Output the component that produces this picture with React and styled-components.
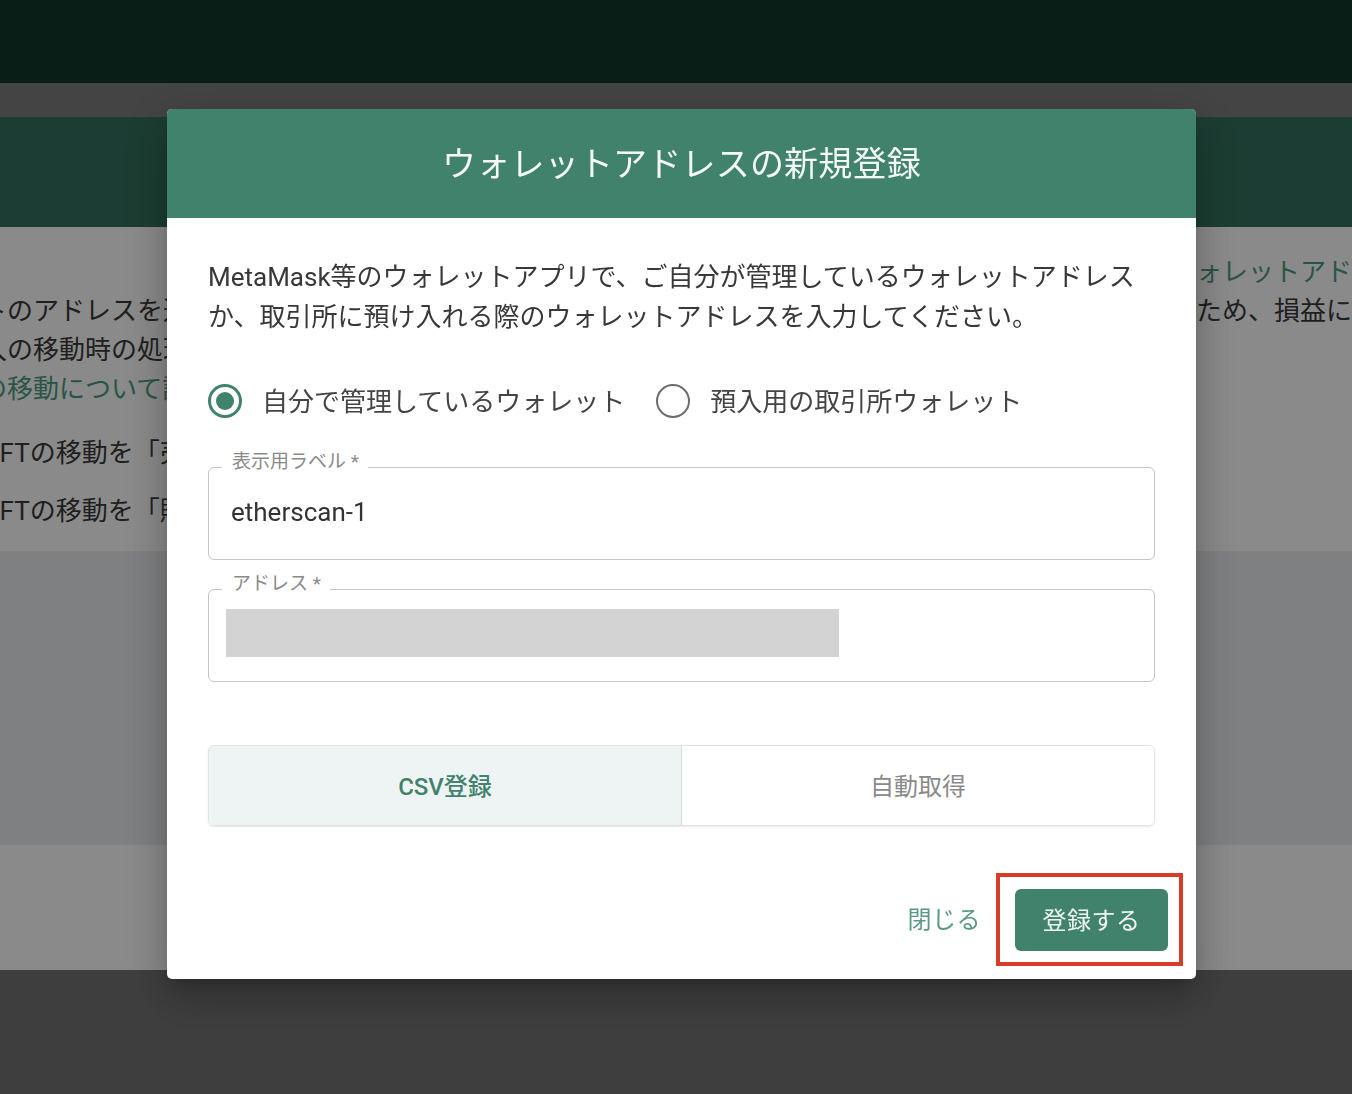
import React from "react";
import styled, { createGlobalStyle } from "styled-components";

const FONT = `"Roboto", "Noto Sans CJK JP", "Noto Sans", sans-serif`;
const GREEN = "#41826d";

const Global = createGlobalStyle`
  html, body {
    margin: 0;
    padding: 0;
    height: 1094px;
    overflow: hidden;
    font-family: ${FONT};
    background: #ffffff;
  }
  * { box-sizing: border-box; }
`;

/* ---------- background page ---------- */
const Page = styled.div`
  display: flex;
  flex-direction: column;
  width: 100%;
  height: 1094px;
  overflow: hidden;
`;

const TopNav = styled.header`
  height: 83px;
  background: #14392e;
  flex-shrink: 0;
`;

const SubBar = styled.div`
  height: 34px;
  background: #7e7e7e;
  flex-shrink: 0;
`;

const HeroBand = styled.div`
  height: 110px;
  background: #34715e;
  flex-shrink: 0;
`;

const ContentSection = styled.section`
  height: 324px;
  flex-shrink: 0;
  background: #ffffff;
  display: grid;
  grid-template-columns: 1170px 1fr;
  overflow: hidden;
  font-size: 26px;
  color: #3a3a3a;
  white-space: nowrap;
`;

const LeftCol = styled.div`
  margin-left: -19px;
  padding-top: 65px;
  overflow: hidden;
`;

const RightCol = styled.div`
  padding-top: 26px;
`;

const BgLine = styled.div`
  line-height: 39px;
  height: 39px;
  color: ${(p) => (p.$link ? "#4d9d83" : "#3a3a3a")};
`;

const BgItem = styled.div`
  line-height: 40px;
  margin-top: ${(p) => p.$gap}px;
`;

const GraySection = styled.div`
  height: 294px;
  flex-shrink: 0;
  background: #ebedf1;
`;

const WhiteSection = styled.div`
  height: 125px;
  flex-shrink: 0;
  background: #ffffff;
`;

const PageFooter = styled.footer`
  flex: 1;
  background: #747474;
`;

/* ---------- dialog ---------- */
const Backdrop = styled.div`
  position: fixed;
  inset: 0;
  background: rgba(0, 0, 0, 0.46);
  display: flex;
  align-items: center;
  justify-content: center;
  padding-left: 11px;
  padding-bottom: 6px;
`;

const Dialog = styled.div`
  width: 1029px;
  background: #ffffff;
  border-radius: 5px;
  overflow: hidden;
  box-shadow: 0 11px 15px -7px rgba(0, 0, 0, 0.2),
    0 24px 38px 3px rgba(0, 0, 0, 0.14), 0 9px 46px 8px rgba(0, 0, 0, 0.12);
  font-family: ${FONT};
`;

const DialogHeader = styled.div`
  height: 109px;
  background: ${GREEN};
  display: flex;
  align-items: center;
  justify-content: center;
  padding-bottom: 4px;
`;

const Title = styled.h2`
  margin: 0;
  font-size: 34px;
  font-weight: 400;
  color: #f4f8f6;
  letter-spacing: 0.2px;
`;

const DialogBody = styled.div`
  padding: 39px 41px 0;
`;

const Description = styled.p`
  margin: 0;
  font-size: 26px;
  line-height: 40px;
  color: #383838;
`;

const RadioGroup = styled.div`
  margin-top: 40px;
  height: 48px;
  display: flex;
  align-items: center;
  gap: 31px;
`;

const RadioOption = styled.label`
  display: flex;
  align-items: center;
  gap: 20px;
  font-size: 26px;
  color: #444;
  padding-bottom: 3px;
  cursor: pointer;
`;

const RadioCircle = styled.span`
  width: 34px;
  height: 34px;
  border-radius: 50%;
  border: ${(p) => (p.$checked ? `3px solid ${GREEN}` : "2.5px solid #6d6d6d")};
  display: flex;
  align-items: center;
  justify-content: center;
  flex-shrink: 0;
  margin-top: 3px;
  &::after {
    content: "";
    width: 18px;
    height: 18px;
    border-radius: 50%;
    background: ${GREEN};
    display: ${(p) => (p.$checked ? "block" : "none")};
  }
`;

const Field = styled.div`
  position: relative;
  margin-top: ${(p) => p.$gap}px;
  height: 93px;
  border: 1.5px solid #c6c6c6;
  border-radius: 6px;
  display: flex;
  align-items: ${(p) => (p.$top ? "flex-start" : "center")};
`;

const FieldLabel = styled.span`
  position: absolute;
  top: -18px;
  left: 13px;
  padding: 0 9px 0 10px;
  background: #ffffff;
  font-size: 19px;
  line-height: 24px;
  color: #8a8a8a;
`;

const FieldInput = styled.input`
  border: none;
  outline: none;
  background: transparent;
  width: 100%;
  padding: 0 0 3px 22px;
  font-family: ${FONT};
  font-size: 26px;
  color: #333;
`;

const Redacted = styled.div`
  margin: 19px 0 0 17px;
  width: 613px;
  height: 48px;
  background: #d3d3d3;
`;

const Tabs = styled.div`
  margin-top: 63px;
  height: 81px;
  display: grid;
  grid-template-columns: 472px 1fr;
  border: 1.5px solid #dfe3e2;
  border-radius: 6px;
  overflow: hidden;
  box-shadow: 0 1px 2px rgba(0, 0, 0, 0.1);
`;

const Tab = styled.button`
  border: none;
  border-left: ${(p) => (p.$first ? "none" : "1.5px solid #d6dcda")};
  background: ${(p) => (p.$active ? "#eef4f3" : "#ffffff")};
  color: ${(p) => (p.$active ? GREEN : "#8a8a8a")};
  font-family: ${FONT};
  font-size: 24px;
  font-weight: ${(p) => (p.$active ? 500 : 400)};
  display: flex;
  align-items: center;
  justify-content: center;
  padding: 0 0 3px;
  cursor: pointer;
`;

const DialogFooter = styled.div`
  margin-top: 47px;
  padding: 0 13px 13px;
  display: flex;
  justify-content: flex-end;
  align-items: center;
  gap: 15px;
`;

const TextButton = styled.button`
  border: none;
  background: none;
  padding: 0 0 4px;
  font-family: ${FONT};
  font-size: 24px;
  color: #5b9985;
  letter-spacing: 0.5px;
  cursor: pointer;
`;

const HighlightFrame = styled.div`
  border: 4px solid #d63c27;
  padding: 12px 11px 11px 15px;
  display: flex;
`;

const PrimaryButton = styled.button`
  width: 153px;
  height: 62px;
  border: none;
  border-radius: 6px;
  background: ${GREEN};
  color: #eef5f2;
  font-family: ${FONT};
  font-size: 24px;
  letter-spacing: 0.5px;
  padding: 0 0 4px;
  cursor: pointer;
`;

export default function App() {
  return (
    <>
      <Global />
      <Page>
        <TopNav />
        <SubBar />
        <HeroBand />
        <ContentSection>
          <LeftCol>
            <BgLine>トのアドレスを送金元として登録</BgLine>
            <BgLine>入の移動時の処理について</BgLine>
            <BgLine $link>の移動について詳しくはこちら</BgLine>
            <BgItem $gap={24}>NFTの移動を「売却」として処理</BgItem>
            <BgItem $gap={18}>NFTの移動を「購入」として処理</BgItem>
          </LeftCol>
          <RightCol>
            <BgLine $link>ウォレットアドレスについて</BgLine>
            <BgLine>るため、損益に反映されます</BgLine>
          </RightCol>
        </ContentSection>
        <GraySection />
        <WhiteSection />
        <PageFooter />
      </Page>

      <Backdrop>
        <Dialog role="dialog">
          <DialogHeader>
            <Title>ウォレットアドレスの新規登録</Title>
          </DialogHeader>
          <DialogBody>
            <Description>
              MetaMask等のウォレットアプリで、ご自分が管理しているウォレットアドレスか、取引所に預け入れる際のウォレットアドレスを入力してください。
            </Description>
            <RadioGroup>
              <RadioOption>
                <RadioCircle $checked />
                自分で管理しているウォレット
              </RadioOption>
              <RadioOption>
                <RadioCircle />
                預入用の取引所ウォレット
              </RadioOption>
            </RadioGroup>
            <Field $gap={42}>
              <FieldLabel>表示用ラベル *</FieldLabel>
              <FieldInput defaultValue="etherscan-1" />
            </Field>
            <Field $gap={29} $top>
              <FieldLabel>アドレス *</FieldLabel>
              <Redacted />
            </Field>
            <Tabs>
              <Tab $active $first>CSV登録</Tab>
              <Tab>自動取得</Tab>
            </Tabs>
          </DialogBody>
          <DialogFooter>
            <TextButton>閉じる</TextButton>
            <HighlightFrame>
              <PrimaryButton>登録する</PrimaryButton>
            </HighlightFrame>
          </DialogFooter>
        </Dialog>
      </Backdrop>
    </>
  );
}
